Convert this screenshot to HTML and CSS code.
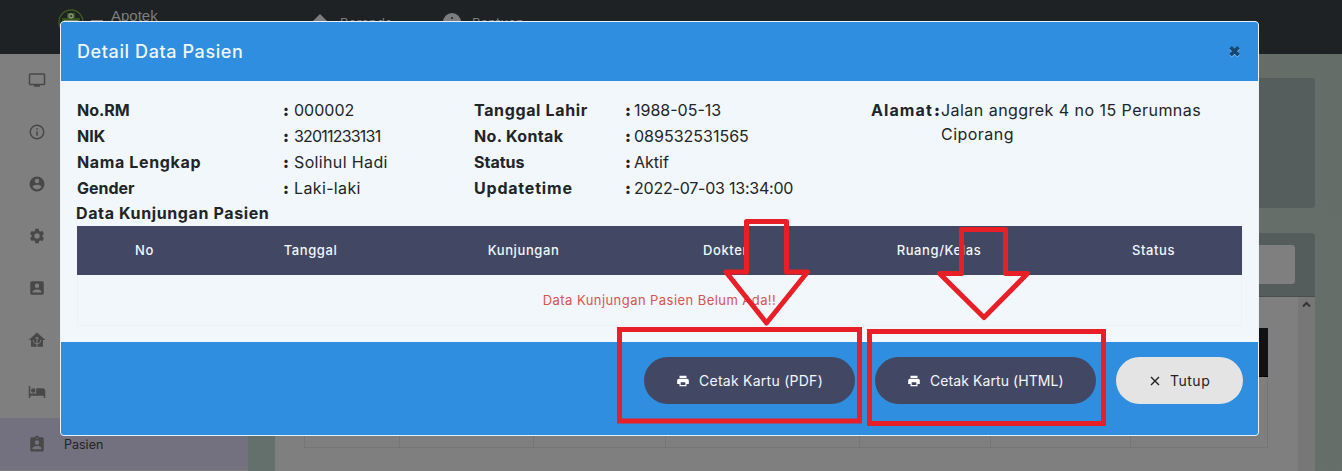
FILE: index.html
```html
<!DOCTYPE html>
<html lang="id">
<head>
<meta charset="utf-8">
<title>Detail Data Pasien</title>
<link rel="stylesheet" href="styles.css">
</head>
<body>
<div class="page">
  <header class="topbar">
    <svg class="logo" width="26" height="26" viewBox="0 0 26 26"><circle cx="13" cy="13" r="12" fill="none" stroke="#3f5a20" stroke-width="1.4"/><path d="M9 4h8v5h5v8h-5v5H9v-5H4V9h5z" fill="#35521c"/><circle cx="13" cy="7" r="2" fill="none" stroke="#8b9485" stroke-width="1.3"/><path d="M6 12h14" stroke="#8b9485" stroke-width="1.5"/></svg>
    <svg class="burger" width="12" height="14" viewBox="0 0 12 14"><path d="M0 1h12M0 6h12M0 11h12" stroke="#77797b" stroke-width="2"/></svg>
    <span class="brand">Apotek</span>
    <svg class="home" width="16" height="16" viewBox="0 0 16 16"><path d="M8 0l8 8h-2v8H2V8H0z" fill="#7c7d7e"/></svg>
    <span class="nav nav-home">Beranda</span>
    <svg class="help" width="18" height="18" viewBox="0 0 18 18"><circle cx="9" cy="9" r="9" fill="#7c7d7e"/><path d="M9 4v2M9 8v6" stroke="#35383a" stroke-width="2"/></svg>
    <span class="nav">Bantuan</span>
  </header>
  <div class="frame">
    <nav class="sidebar">
      <a class="item"><svg class="ico" viewBox="0 0 24 24"><path d="M21 3H3a2 2 0 0 0-2 2v12c0 1.100.9 2 2 2h5v2h8v-2h5a2 2 0 0 0 2-2V5a2 2 0 0 0-2-2zm0 14H3V5h18z"/></svg></a>
      <a class="item"><svg class="ico" viewBox="0 0 24 24"><path d="M11 7h2v2h-2zm0 4h2v6h-2zm1-9a10 10 0 1 0 0 20 10 10 0 0 0 0-20zm0 18a8 8 0 1 1 0-16 8 8 0 0 1 0 16z"/></svg></a>
      <a class="item"><svg class="ico" viewBox="0 0 24 24"><path d="M12 2a10 10 0 1 0 0 20 10 10 0 0 0 0-20zm0 3a3 3 0 1 1 0 6 3 3 0 0 1 0-6zm0 14.200a7.200 7.200 0 0 1-6-3.220c.03-1.990 4-3.080 6-3.080s5.970 1.090 6 3.080a7.200 7.200 0 0 1-6 3.220z"/></svg></a>
      <a class="item"><svg class="ico" viewBox="0 0 24 24"><path d="M19.140 12.940c.04-.3.060-.61.060-.94s-.02-.64-.07-.94l2.030-1.580a.49.49 0 0 0 .12-.61l-1.920-3.320a.49.49 0 0 0-.59-.22l-2.390.96c-.5-.38-1.030-.7-1.620-.94l-.36-2.540a.48.48 0 0 0-.48-.41h-3.840a.47.47 0 0 0-.47.41l-.36 2.540c-.59.24-1.130.57-1.620.94l-2.390-.96a.48.48 0 0 0-.59.22L2.740 8.870a.47.47 0 0 0 .12.610l2.030 1.580a6 6 0 0 0 0 1.880l-2.030 1.580a.49.49 0 0 0-.12.610l1.920 3.320c.12.220.370.290.590.220l2.390-.96c.5.380 1.030.7 1.620.94l.36 2.540c.05.240.240.410.480.410h3.840c.24 0 .44-.17.470-.41l.36-2.540c.59-.24 1.130-.56 1.620-.94l2.390.96c.22.080.470 0 .59-.22l1.920-3.320a.47.47 0 0 0-.12-.61zM12 15.600a3.600 3.600 0 1 1 0-7.200 3.600 3.600 0 0 1 0 7.200z"/></svg></a>
      <a class="item"><svg class="ico" viewBox="0 0 24 24"><path d="M5 3a2 2 0 0 0-2 2v14c0 1.100.9 2 2 2h14a2 2 0 0 0 2-2V5a2 2 0 0 0-2-2zm10 6a3 3 0 1 1-6 0 3 3 0 0 1 6 0zm-9 8c0-2 4-3.100 6-3.100s6 1.100 6 3.100v1H6z"/></svg></a>
      <a class="item"><svg class="ico" viewBox="0 0 24 24"><path d="M12 2L1 12h3v9h16v-9h3z"/><path d="M12 8v13M7 12c0 3.500 2 5 5 5s5-1.500 5-5M10 9.500h4" fill="none" stroke="#7f7f7f" stroke-width="1.300"/></svg></a>
      <a class="item"><svg class="ico" viewBox="0 0 24 24"><path d="M7 13a3 3 0 1 0 0-6 3 3 0 0 0 0 6zm12-6h-8v7H3V4H1v16h2v-3h18v3h2v-9a4 4 0 0 0-4-4z"/></svg></a>
      <a class="item active"><svg class="ico" viewBox="0 0 24 24"><path d="M19 3h-4.180a3 3 0 0 0-5.640 0H5a2 2 0 0 0-2 2v15c0 1.100.9 2 2 2h14a2 2 0 0 0 2-2V5a2 2 0 0 0-2-2zm-7 0a1 1 0 1 1 0 2 1 1 0 0 1 0-2zm0 4a3 3 0 1 1 0 6 3 3 0 0 1 0-6zm6 12H6v-1.400c0-2 4-3.100 6-3.100s6 1.100 6 3.100z"/></svg><span>Pasien</span></a>
    </nav>
    <main class="main">
      <section class="summary"></section>
      <section class="panel">
        <div class="panel-head"><div class="search"></div></div>
        <div class="panel-body">
          <div class="list">
            <div class="list-head"></div>
            <div class="list-row"><i></i><i></i><i></i><i></i><i></i><i></i><i></i></div>
          </div>
          <div class="scroll"><svg width="9" height="7" viewBox="0 0 9 7"><path d="M1 5.500l3.500-3.500L8 5.500" fill="none" stroke="#333" stroke-width="2"/></svg></div>
        </div>
      </section>
    </main>
  </div>
</div>

<div class="modal">
  <div class="modal-head">
    <h1>Detail Data Pasien</h1>
    <svg class="close" width="13" height="13" viewBox="0 0 13 13"><path d="M2.500 3.200l8 8M10.500 3.200l-8 8" stroke="#7fbcf0" stroke-width="3.600"/><path d="M2.500 2.200l8 8M10.500 2.200l-8 8" stroke="#174770" stroke-width="3.600"/></svg>
  </div>
  <div class="modal-body">
    <div class="info">
      <dl class="col one">
        <dt>No.RM</dt><b>:</b><dd>000002</dd>
        <dt>NIK</dt><b>:</b><dd class="nik">32011233131</dd>
        <dt class="wide">Nama Lengkap</dt><b>:</b><dd class="open">Solihul Hadi</dd>
        <dt>Gender</dt><b>:</b><dd class="open">Laki-laki</dd>
      </dl>
      <dl class="col two">
        <dt class="wide">Tanggal Lahir</dt><b>:</b><dd>1988-05-13</dd>
        <dt class="open">No. Kontak</dt><b>:</b><dd>089532531565</dd>
        <dt>Status</dt><b>:</b><dd>Aktif</dd>
        <dt class="wider">Updatetime</dt><b>:</b><dd class="time">2022-07-03 13:34:00</dd>
      </dl>
      <dl class="col three">
        <dt class="widest">Alamat</dt><b>:</b><dd class="address">Jalan anggrek 4 no 15 Perumnas<br>Ciporang</dd>
      </dl>
    </div>
    <h2>Data Kunjungan Pasien</h2>
    <div class="visits">
      <div class="visits-head"><span>No</span><span>Tanggal</span><span>Kunjungan</span><span>Dokter</span><span>Ruang/Kelas</span><span>Status</span></div>
      <div class="empty">Data Kunjungan Pasien Belum Ada!!</div>
    </div>
  </div>
  <div class="modal-foot">
    <button class="btn pdf"><svg width="14" height="14" viewBox="0 0 24 24"><path d="M19 8H5a3 3 0 0 0-3 3v6h4v4h12v-4h4v-6a3 3 0 0 0-3-3zm-3 11H8v-5h8zM18 3H6v4h12z" fill="#fff"/></svg><span>Cetak Kartu (PDF)</span></button>
    <button class="btn html"><svg width="14" height="14" viewBox="0 0 24 24"><path d="M19 8H5a3 3 0 0 0-3 3v6h4v4h12v-4h4v-6a3 3 0 0 0-3-3zm-3 11H8v-5h8zM18 3H6v4h12z" fill="#fff"/></svg><span>Cetak Kartu (HTML)</span></button>
    <button class="btn shut"><svg width="10" height="10" viewBox="0 0 10 10"><path d="M1 1l8 8M9 1l-8 8" stroke="#222" stroke-width="1.400"/></svg><span>Tutup</span></button>
  </div>
</div>

<svg class="marks" width="1342" height="471" viewBox="0 0 1342 471" fill="none" stroke="#e81f27" stroke-width="5">
  <rect x="619.5" y="329.500" width="240" height="91.500"/>
  <rect x="869.5" y="331.500" width="234" height="92"/>
  <path stroke-linejoin="round" d="M746.500 221.500h40v50.500h21l-41 51-40.500-51h20.500z"/>
  <path stroke-linejoin="round" d="M961.500 229.500h44v44h22l-43.500 44-44.500-44h22z"/>
</svg>
</body>
</html>
```
FILE: styles.css
```css
* { box-sizing: border-box; }
body { margin: 0; font-family: Inter, "Open Sans", sans-serif; color: #212529; }
h1, h2, dl, dd { margin: 0; }

.page { width: 1342px; height: 471px; overflow: hidden; display: flex; flex-direction: column; background: #66706b; }
.topbar { height: 54px; flex: none; background: #1e2225; display: flex; align-items: flex-start; padding: 8px 0 0 58px; color: #7c7d7e; }
.logo { margin-top: 1px; }
.burger { margin: 12px 0 0 7px; }
.brand { font: 15px/18px "Liberation Sans", sans-serif; margin: -1px 0 0 8px; width: 201px; }
.home { margin-top: 6px; }
.nav { font-size: 13px; line-height: 16px; margin: 7px 0 0 11px; letter-spacing: .2px; }
.nav-home { width: 103px; margin-left: 12px; }
.help { margin-top: 5px; }

.frame { flex: 1; display: flex; min-height: 0; }
.sidebar { width: 248px; background: #7f7f7f; }
.item { height: 52px; display: flex; align-items: center; padding-left: 28px; gap: 18px; font-size: 12.5px; color: #232323; }
.item span { padding-top: 1px; }
.ico { width: 18px; height: 18px; fill: #484848; flex: none; }
.active { background: #737080; }
.main { flex: 1; padding: 24px 27px 0; background: linear-gradient(60deg, #63706b, #67706b 60%, #646d67); }
.summary { height: 130px; border-radius: 3px; background: #565e5d; }
.panel { height: 238px; margin-top: 25px; border-radius: 3px 3px 0 0; overflow: hidden; background: #7f7f7f; }
.panel-head { height: 64px; background: #545d5b; border-bottom: 1px solid #474e4d; padding: 12px 20px; }
.search { height: 39px; background: #7f7f7f; border-radius: 3px; }
.panel-body { height: 174px; display: flex; }
.list { flex: 1; padding: 31px 30px 0 29px; }
.list-head { height: 49px; background: #121214; border-bottom: 1px solid #000; }
.list-row { height: 71px; display: grid; grid-template-columns: 95px 134px 132px 194px 131px 140px 1fr; border-left: 1px solid #757575; border-bottom: 1px solid #757575; }
.list-row i { border-right: 1px solid #757575; }
.scroll { width: 17px; background: #777; display: flex; justify-content: center; padding-top: 4px; }

.modal { position: absolute; left: 60px; top: 21px; width: 1199px; height: 415px; border: 1px solid #e9f2f8; border-radius: 4px; background: #f1f7fb; overflow: hidden; display: flex; flex-direction: column; }
.modal-head { height: 59px; flex: none; background: #2f8ee0; display: flex; justify-content: space-between; align-items: center; padding: 0 17px 0 16px; }
.modal-head h1 { font-size: 18px; font-weight: 500; line-height: 27px; letter-spacing: .6px; color: #f1f7fb; }
.modal-body { flex: 1; padding: 17px 16px 0 16px; }
.info { display: grid; grid-template-columns: 397px 397px 1fr; height: 103px; }
.col { display: grid; grid-auto-rows: 26px; font-size: 16px; line-height: 25px; align-content: start; white-space: nowrap; }
.col b { font-weight: 900; }
.one { grid-template-columns: 206px 11px 1fr; }
.two { grid-template-columns: 151px 9px 1fr; }
.three { grid-template-columns: 63px 7px 1fr; }
dt, h2 { font-weight: 700; }
.open { letter-spacing: .36px; }
.wide { letter-spacing: .64px; }
.wider { letter-spacing: .8px; }
.widest { letter-spacing: 1.1px; }
.nik { letter-spacing: -.8px; }
.time { letter-spacing: -.22px; }
.address { line-height: 24px; letter-spacing: .46px; }
h2 { font-size: 16px; line-height: 24px; letter-spacing: .62px; margin: 0 0 1px -1px; white-space: nowrap; }
.visits { height: 100px; border: 1px solid #edf1f4; border-top: 0; }
.visits-head { height: 49px; margin: 0 -1px; padding-bottom: 1px; background: #424863; display: grid; grid-template-columns: 135px 197px 229px 175px 252px 1fr; align-items: center; text-align: center; font-size: 13px; font-weight: 500; letter-spacing: .6px; color: #f1f7fb; }
.empty { padding-top: 15px; text-align: center; color: #d9534f; font-size: 13px; line-height: 20px; letter-spacing: .44px; }
.modal-foot { height: 93px; flex: none; background: #2f8ee0; display: flex; justify-content: flex-end; gap: 20px; padding: 15px 15px 0 0; }
.btn { height: 47px; border: 0; border-radius: 24px; background: #424863; color: #f4f7fb; font-family: inherit; font-size: 14px; display: flex; align-items: center; padding: 0; white-space: nowrap; }
.pdf { width: 211px; padding-left: 32px; gap: 9px; letter-spacing: .26px; }
.html { width: 221px; padding-left: 32px; gap: 9px; letter-spacing: .08px; }
.shut { width: 127px; padding-left: 34px; gap: 10px; letter-spacing: .5px; background: #e4e4e4; color: #222; }

.marks { position: absolute; left: 0; top: 0; }
```
